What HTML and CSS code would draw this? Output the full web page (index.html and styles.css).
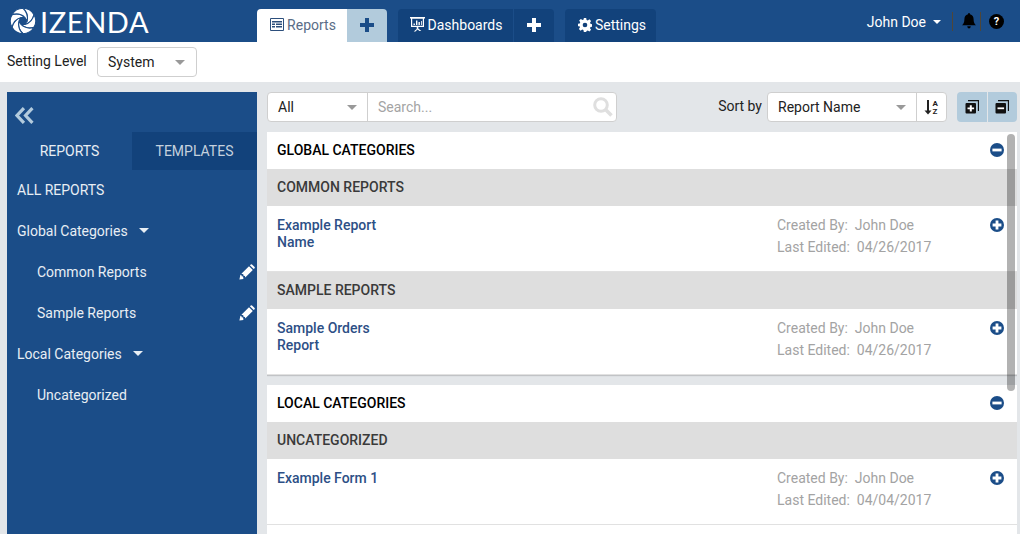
FILE: index.html
```html
<!DOCTYPE html>
<html lang="en">
<head>
<meta charset="utf-8">
<title>Izenda Reports</title>
<link rel="stylesheet" href="styles.css">
</head>
<body>
<svg class="defs" width="0" height="0" aria-hidden="true">
  <symbol id="plus-circle" viewBox="0 0 16 16">
    <circle cx="8" cy="8" r="7" fill="#1b4d88"/>
    <path d="M3.6 6.6h3v-3h2.8v3h3v2.8h-3v3H6.6v-3h-3z" fill="#fff"/>
  </symbol>
  <symbol id="minus-circle" viewBox="0 0 16 16">
    <circle cx="8" cy="8" r="7" fill="#1b4d88"/>
    <path d="M3.4 6.6h9.2v2.8H3.4z" fill="#fff"/>
  </symbol>
  <symbol id="pencil" viewBox="0 0 16 16">
    <path d="M0.4 15.6l1-4.800 1 0.100 0.200 1.400 1.500 0.300 0.200 1.300 0.100 1zM2.400 9.800L10 2.200l3.800 3.800-7.600 7.600-0.200-1.500-1.500-0.300-0.200-1.500zM10.900 1.300l0.900-0.900q.6-.5 1.200 0l2.600 2.600q.5.6 0 1.200l-0.900 0.900z" fill="#fff"/>
  </symbol>
  <symbol id="blade" viewBox="0 0 26 26">
    <path d="M13 .3A12.700 12.700 0 0 1 24 6.650C22.790 11.960 18.960 15.330 15 16.460L17 13C18 9 17 4 13 .3z" fill="#fff" stroke="#1b4d88" stroke-width="1.100"/>
  </symbol>
</svg>

<header class="topbar">
  <div class="logo">
    <svg class="logo-mark" viewBox="0 0 26 26" aria-hidden="true">
      <use href="#blade"/>
      <use href="#blade" transform="rotate(60 13 13)"/>
      <use href="#blade" transform="rotate(120 13 13)"/>
      <use href="#blade" transform="rotate(180 13 13)"/>
      <use href="#blade" transform="rotate(240 13 13)"/>
      <use href="#blade" transform="rotate(300 13 13)"/>
    </svg>
    <span class="logo-text">IZENDA</span>
  </div>

  <nav class="tabs">
    <div class="tab-group">
      <a class="tab tab-active">
        <svg class="ico-table" viewBox="0 0 14 13" aria-hidden="true"><path d="M0.5 0.5h13v12H0.5z" fill="none" stroke="#2d4f7c"/><path d="M2 3h10v1.6H2zM2 5.6h3v1.5H2zM6 5.6h6v1.5H6zM2 8.1h3v1.5H2zM6 8.1h6v1.5H6z" fill="#2d4f7c"/></svg>
        <span>Reports</span>
      </a>
      <a class="tab tab-plus-light">
        <svg class="ico-plus" viewBox="0 0 14 14" aria-hidden="true"><path d="M5 0h4v5h5v4H9v5H5V9H0V5h5z" fill="#1b4d88"/></svg>
      </a>
    </div>
    <div class="tab-group">
      <a class="tab tab-dark tab-dash">
        <svg class="ico-dash" viewBox="0 0 15 15" aria-hidden="true"><path d="M0 0h15v1.500H14v8.500H8.300v1.500l3 2.500H9.500L7.500 12.600 5.500 14.500H3.700l3-2.500V10H1V1.500H0zM2.200 1.800v7h10.600v-7z" fill="#fff"/><path d="M3.500 6.500h1.400v1.500H3.500zM6 3.500h1.400V8H6zM8.500 5h1.400v3H8.500zM11 4h.8v4H11z" fill="#fff"/></svg>
        <span>Dashboards</span>
      </a>
      <a class="tab tab-dark tab-dash-plus">
        <svg class="ico-plus" viewBox="0 0 14 14" aria-hidden="true"><path d="M5 0h4v5h5v4H9v5H5V9H0V5h5z" fill="#fff"/></svg>
      </a>
    </div>
    <div class="tab-group">
      <a class="tab tab-dark tab-settings">
        <svg class="ico-gear" viewBox="0 0 24 24" aria-hidden="true"><path fill-rule="evenodd" d="M10 0h4l.7 3.300 2 .8L19.600 2.300l2.800 2.800-1.800 2.900.8 2 3.300.7v4l-3.300.7-.8 2 1.800 2.900-2.800 2.800-2.900-1.800-2 .8L14 24h-4l-.7-3.300-2-.8-2.900 1.800-2.800-2.800L3.400 16l-.8-2L0 14v-4l3-.7.800-2L2 4.400 4.800 1.600l2.900 1.800 2-.8zM12 8a4 4 0 1 0 0 8 4 4 0 0 0 0-8z" fill="#fff"/></svg>
        <span>Settings</span>
      </a>
    </div>
  </nav>

  <div class="user">
    <span class="user-name">John Doe</span>
    <span class="caret caret-white"></span>
    <span class="user-sep user-sep-first"></span>
    <svg class="ico-bell" viewBox="0 0 14 16" aria-hidden="true"><path d="M7 0q1 0 1 1.200c2.500.5 3.600 2.500 3.600 5 0 3 .8 4.600 2.400 6H0c1.600-1.400 2.400-3 2.400-6 0-2.500 1.100-4.500 3.600-5Q6 0 7 0zM5.200 13.200h3.600Q8.500 15.500 7 15.500T5.200 13.200z" fill="#000"/></svg>
    <span class="user-sep user-sep-second"></span>
    <span class="help">?</span>
  </div>
</header>

<div class="levelbar">
  <span class="level-label">Setting Level</span>
  <div class="select select-level"><span>System</span><span class="caret caret-gray"></span></div>
</div>

<div class="workspace">
  <aside class="sidebar">
    <div class="side-top">
      <svg class="ico-collapse" viewBox="0 0 18 16" aria-hidden="true"><path d="M8 1L1.500 8 8 15M16 1L9.500 8 16 15" fill="none" stroke="#b3cbdd" stroke-width="3"/></svg>
    </div>
    <div class="side-tabs">
      <div class="side-tab">REPORTS</div>
      <div class="side-tab side-tab-dark">TEMPLATES</div>
    </div>
    <ul class="side-list">
      <li class="side-row">ALL REPORTS</li>
      <li class="side-row">Global Categories <span class="caret caret-side"></span></li>
      <li class="side-row side-sub">Common Reports <svg class="ico-pencil"><use href="#pencil"/></svg></li>
      <li class="side-row side-sub">Sample Reports <svg class="ico-pencil"><use href="#pencil"/></svg></li>
      <li class="side-row">Local Categories <span class="caret caret-side"></span></li>
      <li class="side-row side-sub">Uncategorized</li>
    </ul>
  </aside>

  <main class="content">
    <div class="toolbar">
      <div class="search-box">
        <div class="search-type"><span>All</span><span class="caret caret-gray"></span></div>
        <div class="search-input">
          <span class="placeholder">Search...</span>
          <svg class="ico-search" viewBox="0 0 20 20" aria-hidden="true"><circle cx="8" cy="8" r="6.300" fill="none" stroke="#dfdfdf" stroke-width="3"/><path d="M12.500 12.500L18.500 18.500" stroke="#dfdfdf" stroke-width="3.500"/></svg>
        </div>
      </div>
      <div class="sort">
        <span class="sort-label">Sort by</span>
        <div class="sort-box">
          <div class="sort-select"><span>Report Name</span><span class="caret caret-gray"></span></div>
          <div class="sort-dir">
            <svg class="ico-sort" viewBox="0 0 15 16" aria-hidden="true"><path d="M3 1h2v10.500h2.500L4 15.500.500 11.500H3z" fill="#222"/><text x="8.500" y="7" class="sort-a">A</text><text x="8.500" y="15" class="sort-a">Z</text></svg>
          </div>
        </div>
        <div class="expand-group">
          <button class="expand-btn">
            <svg class="ico-expand" viewBox="0 0 14 14" aria-hidden="true"><path d="M3 .5h10.500V11" fill="none" stroke="#111" stroke-width="1.300"/><rect x=".5" y="3" width="10.500" height="10.500" rx="1" fill="#111"/><path d="M2.500 7.500h2.300V5.200h2v2.300h2.300v1.700H6.800v2.300h-2V9.200H2.500z" fill="#fff"/></svg>
          </button>
          <button class="expand-btn">
            <svg class="ico-expand" viewBox="0 0 14 14" aria-hidden="true"><path d="M3 .5h10.500V11" fill="none" stroke="#111" stroke-width="1.300"/><rect x=".5" y="3" width="10.500" height="10.500" rx="1" fill="#111"/><path d="M2.500 7.400h6.600v1.800H2.500z" fill="#fff"/></svg>
          </button>
        </div>
      </div>
    </div>

    <div class="report-area">
      <section class="panel">
        <div class="panel-head"><span>GLOBAL CATEGORIES</span><svg class="ico-circle"><use href="#minus-circle"/></svg></div>
        <div class="group-head">COMMON REPORTS</div>
        <div class="report">
          <a class="report-name">Example Report Name</a>
          <div class="meta">
            <div class="meta-line">Created By:&nbsp; John Doe</div>
            <div class="meta-line">Last Edited:&nbsp; 04/26/2017</div>
          </div>
          <svg class="ico-circle"><use href="#plus-circle"/></svg>
        </div>
        <div class="group-head">SAMPLE REPORTS</div>
        <div class="report">
          <a class="report-name">Sample Orders Report</a>
          <div class="meta">
            <div class="meta-line">Created By:&nbsp; John Doe</div>
            <div class="meta-line">Last Edited:&nbsp; 04/26/2017</div>
          </div>
          <svg class="ico-circle"><use href="#plus-circle"/></svg>
        </div>
      </section>

      <section class="panel panel-fill">
        <div class="panel-head"><span>LOCAL CATEGORIES</span><svg class="ico-circle"><use href="#minus-circle"/></svg></div>
        <div class="group-head">UNCATEGORIZED</div>
        <div class="report">
          <a class="report-name">Example Form 1</a>
          <div class="meta">
            <div class="meta-line">Created By:&nbsp; John Doe</div>
            <div class="meta-line">Last Edited:&nbsp; 04/04/2017</div>
          </div>
          <svg class="ico-circle"><use href="#plus-circle"/></svg>
        </div>
      </section>
      <div class="scroll-thumb"></div>
    </div>
  </main>
</div>
</body>
</html>
```

FILE: styles.css
```css
* { box-sizing: border-box; }
html, body { height: 100%; }
body {
  margin: 0;
  height: 534px;
  overflow: hidden;
  background: #e3e6e9;
  font-family: Roboto, "Liberation Sans", sans-serif;
  font-size: 14px;
  color: #222;
  display: flex;
  flex-direction: column;
}
.defs { position: absolute; }

/* top bar */
.topbar {
  height: 42px;
  flex: none;
  background: #1b4d88;
  display: flex;
  align-items: stretch;
  color: #fff;
}
.logo {
  width: 257px;
  flex: none;
  display: flex;
  align-items: center;
  padding-left: 10px;
  gap: 4px;
}
.logo-mark { width: 26px; height: 26px; flex: none; overflow: visible; }
.logo-text {
  font-family: Lato, "Open Sans", sans-serif;
  font-weight: 400;
  font-size: 29px;
  letter-spacing: 0.6px;
  line-height: 1;
}
.tabs { display: flex; padding-top: 9px; gap: 11px; }
.tab-group { display: flex; }
.tab {
  height: 33px;
  padding-bottom: 2px;
  display: flex;
  align-items: center;
  justify-content: center;
  font-size: 14px;
}
.tab-active {
  width: 90px;
  padding-left: 2px;
  background: #fff;
  color: #5a6d87;
  border-radius: 4px 0 0 0;
  gap: 3px;
}
.tab-plus-light {
  width: 40px;
  background: #b2cbdc;
  border-radius: 0 4px 0 0;
}
.tab-dark { background: #12427b; color: #fff; }
.tab-dash { width: 115px; padding-left: 1px; border-radius: 4px 0 0 0; gap: 3px; margin-right: 1px; }
.tab-dash-plus { width: 40px; border-radius: 0 4px 0 0; }
.tab-settings { width: 91px; padding-left: 3px; border-radius: 4px 4px 0 0; gap: 3px; }
.ico-table { width: 14px; height: 13px; }
.ico-plus { width: 14px; height: 14px; }
.ico-dash { width: 15px; height: 15px; }
.ico-gear { width: 14px; height: 14px; }

.user {
  margin-left: auto;
  display: flex;
  align-items: center;
  padding-right: 16px;
  height: 42px;
}
.user-name { margin-right: 7px; position: relative; top: 1px; }
.user-sep { width: 1px; height: 19px; background: #4f4638; flex: none; }
.user-sep-first { margin-left: 11px; margin-right: 9px; }
.user-sep-second { margin-left: 4px; margin-right: 8px; }
.ico-bell { width: 14px; height: 16px; flex: none; }
.help {
  width: 15px;
  height: 15px;
  border-radius: 50%;
  background: #000;
  color: #fff;
  font-size: 11px;
  font-weight: 700;
  line-height: 15px;
  text-align: center;
}

/* carets */
.caret { display: inline-block; width: 0; height: 0; border-style: solid; border-color: transparent; }
.caret-white { border-width: 4px 4px 0; border-top-color: #fff; margin-top: 2px; }
.caret-side { border-width: 5px 5px 0; border-top-color: #e8eef4; margin-left: 8px; }
.caret-gray { border-width: 5px 5px 0 ; border-top-color: #999; }

/* setting level */
.levelbar {
  height: 40px;
  flex: none;
  background: #fff;
  display: flex;
  align-items: center;
  padding-left: 7px;
}
.level-label { width: 90px; position: relative; top: -1px; }
.select {
  display: flex;
  align-items: center;
  justify-content: space-between;
  background: #fff;
  border: 1px solid #cfcfcf;
  border-radius: 4px;
}
.select-level { width: 100px; height: 30px; padding: 0 11px 0 10px; }

/* workspace */
.workspace {
  flex: 1;
  min-height: 0;
  display: flex;
  padding: 10px 3px 0 7px;
  gap: 10px;
}
.sidebar {
  width: 250px;
  flex: none;
  background: #1b4d88;
  color: #e8eef4;
}
.side-top { height: 40px; padding: 15px 0 0 8px; }
.ico-collapse { width: 20px; height: 17px; display: block; }
.side-tabs { display: flex; height: 38px; }
.side-tab {
  flex: 1;
  display: flex;
  align-items: center;
  justify-content: center;
}
.side-tab-dark { background: #12427b; color: #c5d1de; }
.side-list { list-style: none; margin: 0; padding: 0; }
.side-row {
  height: 41px;
  padding: 0 0 2px 10px;
  display: flex;
  align-items: center;
  white-space: pre;
}
.side-sub { padding-left: 30px; }
.ico-pencil { width: 16px; height: 16px; margin-left: auto; margin-right: 2px; }

/* content */
.content { flex: 1; min-width: 0; display: flex; flex-direction: column; }
.toolbar {
  height: 30px;
  flex: none;
  display: flex;
  justify-content: space-between;
  margin-bottom: 10px;
}
.search-box {
  width: 350px;
  display: flex;
  background: #fff;
  border: 1px solid #cfcfcf;
  border-radius: 4px;
}
.search-type {
  width: 100px;
  flex: none;
  display: flex;
  align-items: center;
  justify-content: space-between;
  padding: 0 10px 0 10px;
  border-right: 1px solid #cfcfcf;
}
.search-input {
  flex: 1;
  display: flex;
  align-items: center;
  justify-content: space-between;
  padding: 0 3px 0 10px;
}
.placeholder { color: #a4a4a4; }
.ico-search { width: 20px; height: 20px; }
.sort { display: flex; align-items: center; }
.sort-label { margin-right: 5px; position: relative; top: -1px; }
.sort-box {
  width: 180px;
  height: 30px;
  display: flex;
  background: #fff;
  border: 1px solid #cfcfcf;
  border-radius: 4px;
}
.sort-select {
  flex: 1;
  display: flex;
  align-items: center;
  justify-content: space-between;
  padding: 0 10px;
}
.sort-dir {
  width: 30px;
  flex: none;
  border-left: 1px solid #cfcfcf;
  display: flex;
  align-items: center;
  justify-content: center;
}
.ico-sort { width: 15px; height: 16px; }
.sort-a { font-size: 8px; font-weight: 700; fill: #222; font-family: Roboto, sans-serif; }
.expand-group { display: flex; width: 60px; margin-left: 10px; gap: 1px; }
.expand-btn {
  flex: 1;
  height: 30px;
  padding: 0;
  border: 0;
  background: #b2cbdc;
  display: flex;
  align-items: center;
  justify-content: center;
}
.expand-btn:first-child { border-radius: 4px 0 0 4px; }
.expand-btn:last-child { border-radius: 0 4px 4px 0; }
.ico-expand { width: 14px; height: 14px; }

/* list */
.report-area { flex: 1; min-height: 0; position: relative; overflow: hidden; }
.panel {
  background: #fff;
  margin-bottom: 10px;
  box-shadow: 0 1px 1px rgba(0, 0, 0, .15);
}
.panel-fill { min-height: 200px; }
.panel-head {
  height: 37px;
  display: flex;
  align-items: center;
  justify-content: space-between;
  padding: 0 12px 2px 10px;
  font-weight: 500;
  color: #000;
}
.group-head {
  height: 37px;
  display: flex;
  align-items: center;
  padding: 0 0 2px 10px;
  background: #dedede;
  font-weight: 500;
  color: #3a3a3a;
}
.ico-circle { width: 16px; height: 16px; flex: none; }
.report {
  height: 65px;
  padding: 10px 12px 0 10px;
  margin-top: 1px;
  display: flex;
  align-items: flex-start;
  border-bottom: 1px solid #e1e1e1;
}
.report-name {
  width: 500px;
  flex: none;
  font-weight: 500;
  color: #2d4f86;
  line-height: 17px;
  padding-right: 390px;
}
.meta { flex: 1; color: #a3a3a3; line-height: 22px; margin-top: -3px; }
.meta-line { white-space: pre; }
.scroll-thumb {
  position: absolute;
  top: 2px;
  right: 2px;
  width: 8px;
  height: 257px;
  border-radius: 4px;
  background: rgba(0, 0, 0, .3);
}
```
